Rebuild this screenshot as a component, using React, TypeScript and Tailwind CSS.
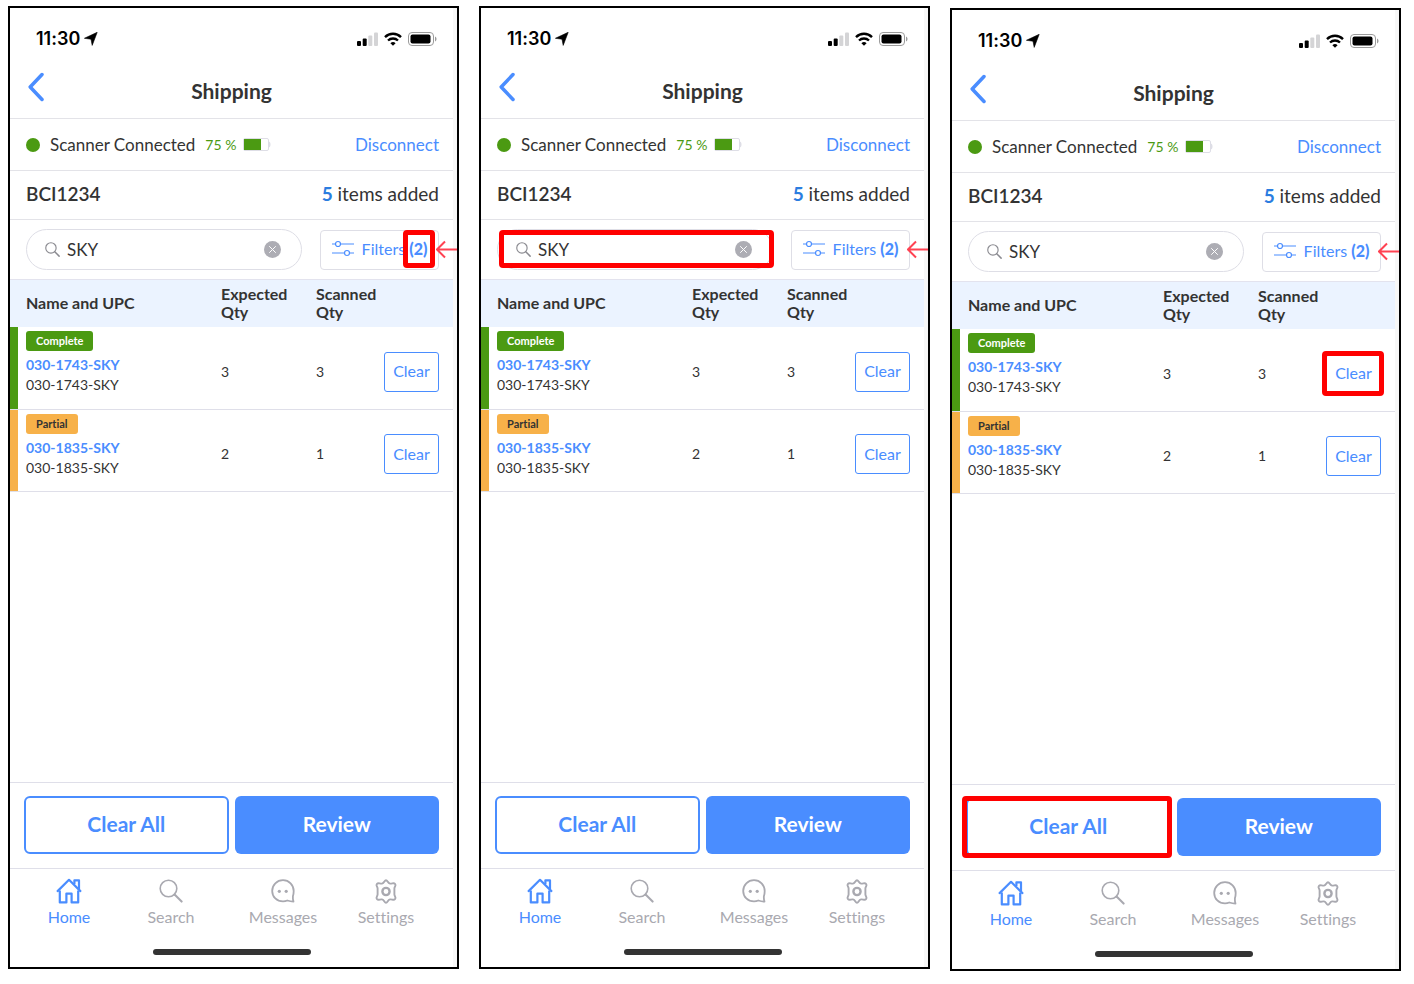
import React from "react";

type Highlight = "filters" | "search" | "clear";

const items = [
  {
    sku: "030-1743-SKY",
    status: "Complete",
    expected: 3,
    scanned: 3,
    badge: "bg-[#4b9a12] text-white",
    bar: "bg-[#4b9a12]",
  },
  {
    sku: "030-1835-SKY",
    status: "Partial",
    expected: 2,
    scanned: 1,
    badge: "bg-[#f7b149] text-[#333333]",
    bar: "bg-[#f7b149]",
  },
];

const Marker: React.FC<{ className: string }> = ({ className }) => (
  <span
    className={`pointer-events-none absolute rounded-sm border-5 border-[#ff0000] ${className}`}
  />
);

const StatusBar = () => (
  <div className="flex h-[62px] items-center justify-between pl-[26px] pr-4">
    <div className="flex items-center gap-1 font-['Inter',sans-serif] text-lg font-semibold text-black">
      11:30
      <svg width="14" height="14" viewBox="0 0 14 14" fill="#000">
        <path d="M13.2.3 8.2 13.4 7 7.2.4 6.3z" stroke="#000" strokeWidth=".6" strokeLinejoin="round" />
      </svg>
    </div>
    <div className="flex items-center gap-1.5">
      <svg width="21" height="14" viewBox="0 0 21 14">
        <rect x="0" y="9" width="4" height="5" rx="1" />
        <rect x="5.7" y="6.5" width="4" height="7.5" rx="1" />
        <rect x="11.3" y="3.5" width="4" height="10.5" rx="1" fill="#d4d4d6" />
        <rect x="17" y="0.5" width="4" height="13.5" rx="1" fill="#d4d4d6" />
      </svg>
      <svg width="18" height="14" viewBox="0 0 18 14" fill="none" stroke="#000">
        <path d="M1 5.1a11.4 11.4 0 0 1 16 0" strokeWidth="2.4" />
        <path d="M4 8.5a7.2 7.2 0 0 1 10 0" strokeWidth="2.3" />
        <path d="M9 13.8 6.4 11.3a3.7 3.7 0 0 1 5.2 0z" fill="#000" stroke="none" />
      </svg>
      <svg width="29" height="14" viewBox="0 0 29 14">
        <rect x="0.5" y="0.5" width="25" height="13" rx="3.5" fill="none" stroke="#9b9b9b" />
        <rect x="2.5" y="2.5" width="20" height="9" rx="2" />
        <path d="M27 4.5c2 .8 2 4.2 0 5z" fill="#9b9b9b" />
      </svg>
    </div>
  </div>
);

const SearchIcon: React.FC<{ size: number; width: number }> = ({ size, width }) => (
  <svg
    width={size}
    height={size}
    viewBox="0 0 24 24"
    fill="none"
    stroke="currentColor"
    strokeWidth={width}
    strokeLinecap="round"
  >
    <circle cx="9.5" cy="9.5" r="8.3" />
    <path d="m15.6 15.6 7 7" strokeWidth={width + 0.5} />
  </svg>
);

const HomeIcon = () => (
  <svg width="26" height="26" viewBox="0 0 26 26" fill="none" stroke="currentColor" strokeWidth="2.2" strokeLinejoin="round">
    <path d="M1.6 13.1 13 1.8l11.400 11.300" strokeLinecap="round" />
    <path d="M18.400 6V2.300h4.600v9" />
    <path d="M3.800 12.500v11.900h6.600v-8.800h5.200v8.800h6.600V12.500" />
  </svg>
);

const MessagesIcon = () => (
  <svg width="24" height="24" viewBox="0 0 24 24" fill="none" stroke="currentColor" strokeWidth="1.8">
    <path
      d="M12 1.200C5.800 1.200 1.200 5.900 1.200 12S5.800 22.500 12 22.500h10.600c-.6-1.200-.9-2.400-1-4 .7-1.900 1.100-4 1.100-6.500C22.700 5.900 18.200 1.200 12 1.200z"
      stroke="none"
    />
    <path
      d="M12 1.200C5.900 1.200 1.200 5.900 1.200 11.900S5.900 22.400 12 22.400c1.500 0 3-.3 4.300-.9 2 .7 4 1.100 6.200 1.100-.5-1.500-.8-3.300-.6-5.400.5-1.600.8-3.300.8-5.300C22.600 5.900 18.100 1.200 12 1.200z"
      strokeLinejoin="round"
    />
    <circle cx="8.300" cy="12.300" r="1.600" fill="currentColor" stroke="none" />
    <circle cx="15.200" cy="12.300" r="1.600" fill="currentColor" stroke="none" />
  </svg>
);

const SettingsIcon = () => (
  <svg
    width="24"
    height="25"
    viewBox="0 0 24 25"
    fill="none"
    stroke="currentColor"
    strokeWidth="1.9"
    strokeLinejoin="round"
  >
    <path d="M12 1.200C13.600 1.200 13.600 4.200 16 4.600c2 .3 3.800-1.200 5 .2 1.700 2-.6 2.700-.6 4.700v6c0 2 2.300 2.700.6 4.700-1.200 1.400-3-.1-5 .2-2.400.4-2.400 3.400-4 3.400s-1.600-3-4-3.400c-2-.3-3.800 1.200-5-.2-1.700-2 .6-2.700.6-4.700v-6c0-2-2.300-2.700-.6-4.700 1.200-1.400 3 .1 5-.2 2.400-.4 2.400-3.400 4-3.400z" />
    <circle cx="12" cy="12.500" r="3.600" strokeWidth="2.400" />
  </svg>
);

const tabs = [
  { label: "Home", icon: <HomeIcon />, color: "text-[#4a8dff]" },
  { label: "Search", icon: <SearchIcon size={24} width={1.6} />, color: "text-[#a9a9b0]" },
  { label: "Messages", icon: <MessagesIcon />, color: "text-[#a9a9b0]" },
  { label: "Settings", icon: <SettingsIcon />, color: "text-[#a9a9b0]" },
];

const Phone: React.FC<{ highlight: Highlight; className: string }> = ({
  highlight,
  className,
}) => (
  <section className={`flex min-w-0 flex-col border-2 border-black bg-[#f7f7f7] pr-1 ${className}`}>
    <div className="flex flex-1 flex-col bg-white">
      <StatusBar />

      <header className="grid h-[49px] grid-cols-[44px_1fr_44px] items-center border-b border-[#e3e3e8] pb-1.5">
        <button aria-label="Back" className="self-start pl-[18px] pt-0.5 text-[#4a8dff]">
          <svg width="17" height="30" viewBox="0 0 17 30" fill="none" stroke="currentColor" strokeWidth="3.500" strokeLinecap="round" strokeLinejoin="round">
            <path d="M14 2.500 2.200 15 14 27.500" />
          </svg>
        </button>
        <h1 className="text-center text-[21px] font-bold leading-7">Shipping</h1>
      </header>

      <div className="flex h-[52px] items-center border-b border-[#e3e3e8] pl-4 pr-3.5">
        <span className="size-3.5 rounded-full bg-[#4b9a12]" />
        <span className="ml-2.5 text-[17px]">Scanner Connected</span>
        <span className="ml-2.5 text-sm text-[#4b9a12]">75 %</span>
        <svg className="ml-[7px]" width="28" height="13" viewBox="0 0 28 13">
          <rect x="0.500" y="0.500" width="25" height="12" rx="1.500" fill="#fff" stroke="#dedee6" />
          <rect x="1" y="1" width="17" height="11" fill="#4b9a12" />
          <path d="M26 3.500c2 .6 2 5.400 0 6z" fill="#dedee6" />
        </svg>
        <button className="ml-auto text-[17px] text-[#4a8dff]">Disconnect</button>
      </div>

      <div className="flex h-[49px] items-center justify-between border-b border-[#e3e3e8] pb-0.5 pl-4 pr-3.5 text-[19px]">
        <span className="font-semibold">BCI1234</span>
        <span>
          <b className="text-[#2b7de0]">5</b> items added
        </span>
      </div>

      <div className="relative flex h-[60px] items-center gap-[18px] border-b border-[#e3e3ee] pl-4 pr-3.5">
        <div className="relative flex h-[41px] flex-1 items-center rounded-full border border-[#dedee6] pl-[18px] pr-5">
          <span className="text-[#8a8a90]">
            <SearchIcon size={15} width={1.8} />
          </span>
          <input
            type="text"
            aria-label="Search items"
            defaultValue="SKY"
            className="ml-[7px] w-full min-w-0 text-[17px] outline-none"
          />
          <button aria-label="Clear search">
            <svg width="17" height="17" viewBox="0 0 17 17">
              <circle cx="8.500" cy="8.500" r="8.500" fill="#adadb4" />
              <path d="m5.500 5.500 6 6m0-6-6 6" stroke="#fff" strokeLinecap="round" />
            </svg>
          </button>
          {highlight === "search" && <Marker className="-right-0.5 bottom-px left-px top-0" />}
        </div>
        <button className="flex h-10 w-[119px] items-center justify-center gap-2 whitespace-nowrap rounded-sm border border-[#dedee6] pb-0.5 text-base text-[#4a8dff]">
          <svg width="22" height="17" viewBox="0 0 22 17" fill="none" stroke="currentColor" strokeWidth="1.200">
            <path d="M0 4h3.500M8.500 4H22M0 13h12.500m5 0H22" />
            <circle cx="6" cy="4" r="2.500" />
            <circle cx="15" cy="13" r="2.500" />
          </svg>
          <span>
            Filters{" "}
            <b className="relative inline-block font-black leading-[22px]">
              (2)
              {highlight === "filters" && <Marker className="-bottom-2 -left-1.5 -right-2 -top-2" />}
            </b>
          </span>
        </button>
        {/* callout arrow, runs up to the frame */}
        <svg className="absolute -right-1 top-5" width="21" height="19" viewBox="0 0 21 19" fill="none" stroke="#ff4252" strokeWidth="2">
          <path d="M21 9.500H1.500M9 1.500l-8 8 8 8" />
        </svg>
      </div>

      <table className="w-full table-fixed border-collapse text-left">
        <thead className="bg-[#ebf3ff] text-base leading-[18px]">
          <tr className="h-[47px]">
            <th className="pb-0.5 pl-4 font-bold">Name and UPC</th>
            <th className="w-[95px] pb-0.5 font-bold">
              Expected
              <br />
              Qty
            </th>
            <th className="w-[68px] whitespace-nowrap pb-0.5 font-bold">
              Scanned
              <br />
              Qty
            </th>
            <th className="w-[69px]" aria-label="Actions" />
          </tr>
        </thead>
        <tbody className="text-sm">
          {items.map((item) => (
            <tr key={item.sku} className="h-[82px] border-b border-[#dfdfe9]">
              <td className="h-[82px] p-0">
                <div className="flex h-full">
                  <span className={`w-2 ${item.bar}`} />
                  <div className="pl-2 pt-1 leading-5">
                    <span
                      className={`mb-1 block h-5 w-fit rounded-[3px] px-2.5 text-[11px] font-bold leading-5 ${item.badge}`}
                    >
                      {item.status}
                    </span>
                    <a href="#" className="block font-bold text-[#4a8dff]">
                      {item.sku}
                    </a>
                    <span className="block">{item.sku}</span>
                  </div>
                </div>
              </td>
              <td className="pt-2">{item.expected}</td>
              <td className="pt-2">{item.scanned}</td>
              <td className="pr-3.5 pt-2">
                <div className="relative">
                  <button className="block h-10 w-full rounded-[3px] border border-[#4a8dff] pb-px text-base text-[#4a8dff]">
                    Clear
                  </button>
                  {highlight === "clear" && item.status === "Complete" && (
                    <Marker className="-bottom-0.5 -left-1 -right-[3px] -top-[3px]" />
                  )}
                </div>
              </td>
            </tr>
          ))}
        </tbody>
      </table>

      <footer className="mt-auto">
        <div className="flex gap-1.5 border-t border-[#dfdfe9] px-3.5 pb-3.5 pt-[13px] text-[21px] font-bold">
          <div className="relative flex-1">
            <button className="block h-[58px] w-full rounded-md border-2 border-[#4a8dff] pb-0.5 text-[#4a8dff]">
              Clear All
            </button>
            {highlight === "clear" && <Marker className="-bottom-0.5 -left-1 -right-px -top-0.5" />}
          </div>
          <button className="h-[58px] flex-1 rounded-md bg-[#4a8dff] pb-0.5 text-white">Review</button>
        </div>
        <nav className="grid h-[73px] grid-cols-[102fr_102fr_122fr_84fr] border-t border-[#dfdfe9] pl-2 pr-[25px] pt-[9px]">
          {tabs.map((tab) => (
            <a key={tab.label} href="#" className={`flex flex-col items-center ${tab.color}`}>
              <span className="flex h-[26px] items-center">{tab.icon}</span>
              <span className="text-base leading-[26px]">{tab.label}</span>
            </a>
          ))}
        </nav>
        <div className="mx-auto mb-3 mt-2 h-1.5 w-[158px] rounded-full bg-[#333333]" />
      </footer>
    </div>
  </section>
);

export default function App() {
  return (
    <main className="grid min-h-screen grid-cols-3 gap-5 bg-white pb-[13px] pl-2 pr-[13px] pt-1.5 font-['Lato',sans-serif] text-[#333333] [font-variant-ligatures:none]">
      <Phone highlight="filters" className="mb-0.5" />
      <Phone highlight="search" className="mb-0.5" />
      <Phone highlight="clear" className="mt-0.5" />
    </main>
  );
}
